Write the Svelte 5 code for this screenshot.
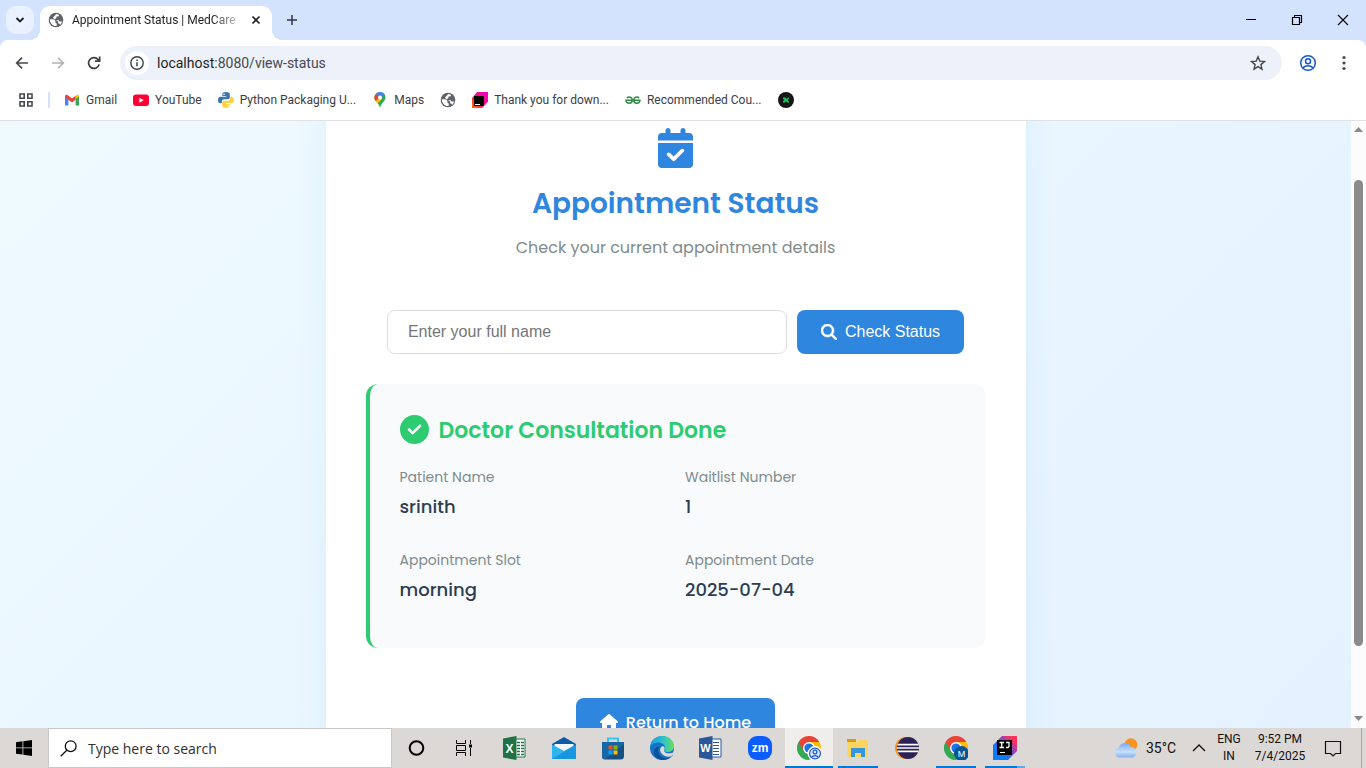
<script>
  let name = $state('');

  const details = [
    { label: 'Patient Name', value: 'srinith' },
    { label: 'Waitlist Number', value: '1' },
    { label: 'Appointment Slot', value: 'morning' },
    { label: 'Appointment Date', value: '2025-07-04' }
  ];

  const bookmarks = [
    { icon: 'gmail', label: 'Gmail' },
    { icon: 'youtube', label: 'YouTube' },
    { icon: 'python', label: 'Python Packaging U...' },
    { icon: 'maps', label: 'Maps' },
    { icon: 'globe', label: '' },
    { icon: 'jetbrains', label: 'Thank you for down...' },
    { icon: 'gfg', label: 'Recommended Cou...' },
    { icon: 'dark', label: '' }
  ];

  const apps = [
    { id: 'cortana', name: 'Cortana' },
    { id: 'taskview', name: 'Task View' },
    { id: 'excel', name: 'Excel' },
    { id: 'mail', name: 'Mail' },
    { id: 'store', name: 'Microsoft Store' },
    { id: 'edge', name: 'Edge' },
    { id: 'word', name: 'Word' },
    { id: 'zoom', name: 'Zoom' },
    { id: 'chrome', name: 'Chrome', state: 'active' },
    { id: 'explorer', name: 'File Explorer', state: 'open' },
    { id: 'eclipse', name: 'Eclipse' },
    { id: 'chromem', name: 'Chrome profile M', state: 'open' },
    { id: 'idea', name: 'IntelliJ IDEA', state: 'open' }
  ];
</script>

{#snippet globe(size)}
  <svg width={size} height={size} viewBox="0 0 16 16" aria-hidden="true">
    <circle cx="8" cy="8" r="7.300" fill="#5f6368" />
    <path d="M1.900 7.300h3.300l2.200 1.500v1.900l1.300.8v2.600C4.800 14.300 1.700 11.300 1.900 7.300zM8.300 1.900l2.800.8-.6 1.600-2.200.4v1.500l-1.500.9.6.9h2.800l1.400 1.500h2.500c-.3 1.300-1 2.500-2 3.300l-.7-1.400h-1.300V9.600L9 8.600 6.200 7.200 5 5.400l1.500-1.500z" fill="#fff" />
  </svg>
{/snippet}

{#snippet chromeLogo()}
  <path d="M12 12V24A12 12 0 0 0 22.400 6H12z" fill="#fbbc04" />
  <path d="M12 12 1.600 6A12 12 0 0 0 12 24l5.200-9z" fill="#34a853" />
  <path d="M12 6h10.400A12 12 0 0 0 1.600 6l5.200 9z" fill="#ea4335" />
  <circle cx="12" cy="12" r="6" fill="#fff" />
  <circle cx="12" cy="12" r="4.600" fill="#1a73e8" />
{/snippet}

<div class="screen">
  <header class="browser">
    <div class="tabs">
      <button class="tab-search" aria-label="Search tabs">
        <svg width="10" height="10" viewBox="0 0 10 10"><path d="m1.500 3 3.500 3.500L8.500 3" fill="none" stroke="#1f1f1f" stroke-width="1.800" /></svg>
      </button>
      <div class="tab">
        {@render globe(16)}
        <span class="tab-title">Appointment Status | MedCare</span>
        <button class="plain" aria-label="Close tab">
          <svg width="10" height="10" viewBox="0 0 10 10"><path d="m1.500 1.500 7 7m0-7-7 7" stroke="#1f1f1f" stroke-width="1.600" /></svg>
        </button>
      </div>
      <button class="plain new-tab" aria-label="New tab">
        <svg width="12" height="12" viewBox="0 0 12 12"><path d="M6 1v10M1 6h10" stroke="#33363b" stroke-width="1.500" /></svg>
      </button>
      <div class="window-buttons">
        <button class="plain" aria-label="Minimize"><svg width="12" height="12" viewBox="0 0 12 12"><path d="M1 5.500h10" stroke="#000" /></svg></button>
        <button class="plain" aria-label="Restore"><svg width="12" height="12" viewBox="0 0 12 12"><path d="M1.500 3.500h7v7h-7zM3.500 3.500v-2h7v7h-2" fill="none" stroke="#000" stroke-width="1.200" /></svg></button>
        <button class="plain" aria-label="Close"><svg width="12" height="12" viewBox="0 0 12 12"><path d="m1 1 10 10M11 1 1 11" stroke="#000" stroke-width="1.100" /></svg></button>
      </div>
    </div>

    <div class="toolbar">
      <button class="plain nav" aria-label="Back"><svg width="16" height="16" viewBox="0 0 16 16"><path d="M14 8H3m5-5.300L2.700 8 8 13.300" fill="none" stroke="#46494d" stroke-width="1.700" /></svg></button>
      <button class="plain nav" aria-label="Forward"><svg width="16" height="16" viewBox="0 0 16 16"><path d="M2 8h11M8 2.700 13.300 8 8 13.300" fill="none" stroke="#b0b2b5" stroke-width="1.600" /></svg></button>
      <button class="plain nav" aria-label="Reload"><svg width="16" height="16" viewBox="0 0 16 16"><path d="M13.200 9.400A5.400 5.400 0 1 1 12 4.400l1.400 1.400M13.700 1.500v4.700H9" fill="none" stroke="#3c4043" stroke-width="1.700" /></svg></button>
      <div class="address">
        <button class="site-info" aria-label="Site information"><svg width="14" height="14" viewBox="0 0 14 14"><circle cx="7" cy="7" r="6.200" fill="none" stroke="#3c4043" stroke-width="1.400" /><path d="M7 6.200v4M7 3.500v1.500" stroke="#3c4043" stroke-width="1.500" /></svg></button>
        <span class="url">localhost<span class="path">:8080/view-status</span></span>
        <button class="plain" aria-label="Bookmark this tab"><svg width="16" height="16" viewBox="0 0 16 16"><path d="m8 1.800 1.800 4.300 4.700.4-3.600 3.100 1.100 4.600L8 11.700l-4 2.500 1.100-4.600L1.500 6.500l4.700-.4z" fill="none" stroke="#46494d" stroke-width="1.400" /></svg></button>
      </div>
      <button class="plain profile" aria-label="Profile"><svg width="18" height="18" viewBox="0 0 18 18" fill="none" stroke="#1558d0" stroke-width="1.500"><circle cx="9" cy="9" r="7.300" /><circle cx="9" cy="7.200" r="2.500" /><path d="M3.800 14c1.500-1.500 3.200-2.200 5.200-2.200s3.700.7 5.200 2.200" /></svg></button>
      <button class="plain menu" aria-label="Browser menu"><svg width="4" height="16" viewBox="0 0 4 16" fill="#46494d"><circle cx="2" cy="2.500" r="1.600" /><circle cx="2" cy="8" r="1.600" /><circle cx="2" cy="13.500" r="1.600" /></svg></button>
    </div>

    <nav class="bookmarks" aria-label="Bookmarks">
      <button class="plain" aria-label="Tab groups"><svg width="16" height="16" viewBox="0 0 16 16"><path d="M2 2h4.200v4.200H2zM9.800 2H14v4.200H9.800zM2 9.800h4.200V14H2zM9.800 9.800H14V14H9.800z" fill="none" stroke="#46494d" stroke-width="1.600" /></svg></button>
      <span class="divider"></span>
      {#each bookmarks as mark}
        <a href="#{mark.icon}" aria-label={mark.label || mark.icon}>
          {#if mark.icon === 'gmail'}
            <svg width="16" height="16" viewBox="0 0 16 16"><path d="M1 13.500V4l3.400 2.500v7z" fill="#4285f4" /><path d="M11.600 13.500v-7L15 4v9.500z" fill="#34a853" /><path d="M11.600 7V3.800c1.400-1.600 3.400-1 3.400.8z" fill="#fbbc04" /><path d="M1 4.600c0-1.800 2-2.400 3.400-.8L8 6.500l3.600-2.700v4L8 10.500 1 5.300z" fill="#ea4335" /></svg>
          {:else if mark.icon === 'youtube'}
            <svg width="16" height="16" viewBox="0 0 16 16"><rect y="2.500" width="16" height="11.500" rx="3" fill="#ff0033" /><path d="m6.300 5.800 4.400 2.400-4.400 2.500z" fill="#fff" /></svg>
          {:else if mark.icon === 'python'}
            <svg width="16" height="16" viewBox="0 0 16 16"><path d="M8 0C5 0 4.300 1 4.300 2.200V4h4v.7H2.500C.8 4.700 0 6 0 8s.8 3.300 2.300 3.300h1.500V9.500c0-1.300 1-2.300 2.300-2.300h3.700c1.200 0 2-.9 2-2V2.200C11.800.7 10.500 0 8 0z" fill="#3776ab" /><path d="M8 16c3 0 3.700-1 3.700-2.200V12h-4v-.7h5.800c1.700 0 2.500-1.300 2.500-3.300s-.8-3.300-2.300-3.300h-1.500v1.800c0 1.300-1 2.300-2.300 2.300H6.200c-1.200 0-2 .9-2 2v3C4.200 15.300 5.500 16 8 16z" fill="#ffd343" /><circle cx="6" cy="2.200" r=".8" fill="#fff" /><circle cx="10" cy="13.800" r=".8" fill="#fff" /></svg>
          {:else if mark.icon === 'maps'}
            <svg width="16" height="16" viewBox="0 0 16 16"><path d="M8 0a5.500 5.500 0 0 0-5.500 5.500C2.500 9.300 7 11 8 16c1-5 5.500-6.700 5.500-10.500A5.500 5.500 0 0 0 8 0z" fill="#34a853" /><path d="M8 0a5.500 5.500 0 0 1 5.100 3.500L8 5.500 3.800 2A5.500 5.500 0 0 1 8 0z" fill="#4285f4" /><path d="M3.800 2 8 5.500 3.600 9A5.500 5.500 0 0 1 3.800 2z" fill="#ea4335" /><path d="M3.600 9 8 5.500l2 1.600-4.300 4.400C4.800 10.600 4 9.800 3.600 9z" fill="#fbbc04" /><circle cx="8" cy="5.500" r="2" fill="#fff" /></svg>
          {:else if mark.icon === 'globe'}
            {@render globe(16)}
          {:else if mark.icon === 'jetbrains'}
            <svg width="16" height="16" viewBox="0 0 16 16"><defs><linearGradient id="jb" x1="0" y1="1" x2="1" y2="0"><stop offset="0" stop-color="#ff6a00" /><stop offset=".45" stop-color="#ff1460" /><stop offset="1" stop-color="#e600e6" /></linearGradient></defs><path d="M5 0h11v9.500L10 16H0V6z" fill="url(#jb)" /><path d="M2 4h10v10H2z" /><path d="M3 12h5v1H3z" fill="#fff" /></svg>
          {:else if mark.icon === 'gfg'}
            <svg width="16" height="16" viewBox="0 0 16 16" fill="none" stroke="#2f8d46" stroke-width="1.500"><path d="M2 6.200c1.400-2 5.300-1.200 5.300 1.800 0 4.300-6 4.300-6.300.3h14c-.3 4-6.300 4-6.300-.3 0-3 3.900-3.800 5.300-1.800" /></svg>
          {:else}
            <svg width="16" height="16" viewBox="0 0 16 16"><circle cx="8" cy="8" r="8" fill="#151719" /><path d="M5 5.500h2.500L8.500 7 10 5.500h1V7L9.500 8l1.500 1.200v1.300H9L8 9.300l-1 1.200H5V9.200L6.500 8 5 7z" fill="#18c45b" /></svg>
          {/if}
          {#if mark.label}<span>{mark.label}</span>{/if}
        </a>
      {/each}
    </nav>
  </header>

  <div class="viewport">
    <main>
      <section class="card">
        <div class="heading">
          <svg class="calendar" viewBox="0 0 448 512" fill="currentColor" aria-hidden="true"><path d="M128 0c17.700 0 32 14.300 32 32V64H288V32c0-17.700 14.300-32 32-32s32 14.300 32 32V64h48c26.500 0 48 21.500 48 48v48H0V112C0 85.500 21.500 64 48 64H96V32c0-17.700 14.300-32 32-32zM0 192H448V464c0 26.500-21.500 48-48 48H48c-26.500 0-48-21.500-48-48V192zM329 305c9.400-9.400 9.400-24.600 0-33.900s-24.600-9.400-33.900 0l-95 95-47-47c-9.400-9.400-24.600-9.400-33.900 0s-9.400 24.600 0 33.900l64 64c9.400 9.400 24.600 9.400 33.900 0L329 305z" /></svg>
          <h1>Appointment Status</h1>
          <p>Check your current appointment details</p>
        </div>

        <form onsubmit={(e) => e.preventDefault()}>
          <input type="text" aria-label="Full name" placeholder="Enter your full name" bind:value={name} />
          <button class="primary">
            <svg width="16" height="16" viewBox="0 0 512 512" fill="currentColor" stroke="currentColor" stroke-width="16" aria-hidden="true"><path d="M416 208c0 45.900-14.900 88.300-40 122.700L502.600 457.400c12.500 12.500 12.500 32.800 0 45.300s-32.800 12.500-45.300 0L330.700 376c-34.400 25.200-76.800 40-122.700 40C93.100 416 0 322.900 0 208S93.100 0 208 0S416 93.100 416 208zM208 352a144 144 0 1 0 0-288 144 144 0 1 0 0 288z" /></svg>
            Check Status
          </button>
        </form>

        <section class="result">
          <h2>
            <svg viewBox="0 0 512 512" fill="currentColor" aria-hidden="true"><path d="M256 512A256 256 0 1 0 256 0a256 256 0 1 0 0 512zM369 209L241 337c-9.400 9.400-24.600 9.400-33.900 0l-64-64c-9.400-9.400-9.400-24.600 0-33.900s24.600-9.400 33.900 0l47 47L335 175c9.400-9.400 24.600-9.400 33.900 0s9.400 24.600 0 33.900z" /></svg>
            <span>Doctor Consultation Done</span>
          </h2>
          <dl>
            {#each details as item}
              <div>
                <dt>{item.label}</dt>
                <dd>{item.value}</dd>
              </div>
            {/each}
          </dl>
        </section>

        <a class="primary home" href="#home">
          <svg width="18" height="16" viewBox="0 0 576 512" fill="currentColor" aria-hidden="true"><path d="M575.800 255.500c0 18-15 32.100-32 32.100h-32l.7 160.200c0 2.700-.2 5.400-.5 8.100V472c0 22.100-17.900 40-40 40H392c-22.100 0-40-17.900-40-40V384c0-17.700-14.300-32-32-32H256c-17.700 0-32 14.300-32 32v88c0 22.100-17.900 40-40 40H104c-22.100 0-40-17.900-40-40V287.600H32c-18 0-32-14-32-32.100c0-9 3-17 10-24L266.400 8c7-7 15-8 22-8s15 2 21 7L564.800 231.500c8 7 12 15 11 24z" /></svg>
          Return to Home
        </a>
      </section>
    </main>
    <div class="scrollbar" aria-hidden="true">
      <svg width="9" height="5" viewBox="0 0 9 5"><path d="M4.500 0 9 5H0z" fill="#8a8a8a" /></svg>
      <span class="track"><span class="thumb"></span></span>
      <svg width="9" height="5" viewBox="0 0 9 5"><path d="M4.500 5 9 0H0z" fill="#8a8a8a" /></svg>
    </div>
  </div>

  <footer class="taskbar">
    <button class="plain start" aria-label="Start"><svg width="16" height="16" viewBox="0 0 16 16"><path d="m0 2.200 6.500-.9v6.200H0zM7.300 1.200 16 0v7.500H7.300zM0 8.300h6.500v6.300L0 13.700zM7.300 8.300H16V16l-8.700-1.300z" /></svg></button>
    <label class="search">
      <svg width="17" height="17" viewBox="0 0 17 17" fill="none" stroke="#111" stroke-width="1.300"><circle cx="10.700" cy="6.200" r="5.400" /><path d="M6.800 10.200.7 16.300" /></svg>
      <input type="text" aria-label="Search" placeholder="Type here to search" />
    </label>
    <div class="apps">
      {#each apps as app}
        <button class="app {app.state ?? ''}" class:grouped={app.id === 'idea'} aria-label={app.name}>
          <svg width="24" height="24" viewBox="0 0 24 24" aria-hidden="true">
            {#if app.id === 'cortana'}
              <circle cx="11.500" cy="12" r="6.800" fill="none" stroke="#000" stroke-width="2" />
            {:else if app.id === 'taskview'}
              <path d="M2.500 4v3.500h9V4M2.500 20v-3.500h9V20M2.500 9.500h9v5h-9zM16.500 4v4M16.500 12v8" fill="none" stroke="#000" /><path d="M15 8.500h3v3h-3z" />
            {:else if app.id === 'excel'}
              <path d="M12 3h10v18H12z" fill="#fff" stroke="#217346" /><path d="M14 6.500h7M14 9.500h7M14 12.500h7M14 15.500h7M14 18.500h7" stroke="#217346" stroke-width="1.500" /><path d="M17.500 5v15" stroke="#fff" /><path d="M0 2.500 13.500 0v24L0 21.500z" fill="#1f7244" /><text x="6.500" y="16.500" text-anchor="middle" class="glyph" font-size="12">X</text>
            {:else if app.id === 'mail'}
              <path d="M0 8 12 1l12 7v15H0z" fill="#0a5ba8" /><path d="M2.500 8h19v8h-19z" fill="#f5f5f5" /><path d="M0 8.500 12 15l12-6.500V23H0z" fill="#2db5ef" /><path d="M0 23 24 8.500V23z" fill="#1897e0" />
            {:else if app.id === 'store'}
              <path d="M7 8V2.500h10V8" fill="none" stroke="#35c3f5" stroke-width="2" /><path d="M1 6h22v14a3.500 3.500 0 0 1-3.500 3.500h-15A3.500 3.500 0 0 1 1 20z" fill="#174f83" /><path d="M1 6h22v2L4 23.500A3.500 3.500 0 0 1 1 20z" fill="#1767a5" /><path d="M7.500 9.500h4v4h-4z" fill="#f25022" /><path d="M12.500 9.500h4v4h-4z" fill="#7fba00" /><path d="M7.500 14.500h4v4h-4z" fill="#00a4ef" /><path d="M12.500 14.500h4v4h-4z" fill="#ffb900" />
            {:else if app.id === 'edge'}
              <defs><linearGradient id="edgeTop" x1="0" y1="0" x2="1" y2="0"><stop offset=".1" stop-color="#1ba4e0" /><stop offset=".6" stop-color="#32c6c3" /><stop offset="1" stop-color="#6cdf55" /></linearGradient></defs>
              <circle cx="12" cy="12" r="12" fill="#1573c4" /><path d="M0 11.500C.5 5 5.500 0 12 0c7 0 12 5 12 10 0 4-3 6-6.500 6-3 0-4-1.200-3.500-2 1-1.200 1.300-2.500.7-4C13.500 7.500 10.500 6.300 7.500 6.500 4 6.800 1 8.500 0 11.500z" fill="url(#edgeTop)" /><path d="M9 10.500c-2 3.500-.5 9.500 4.500 11.500 3 1 6 0 8.500-3.500 1 .5.500 1 0 1.500-4 5-12 5-16 1C2 17 4 11 9 10.500z" fill="#0d4d98" /><path d="M14 14c-.5 2 2.500 4 8 3l2-1-2.200 4c-2.200 1.300-8 1.500-11-3.500-1.300-2.500-.7-4.800 1-6 2-1 3.700 1 2.200 3.500z" fill="#ddd9d6" />
            {:else if app.id === 'word'}
              <path d="M12 3h10v18H12z" fill="#fff" stroke="#2b579a" /><path d="M14 6.500h6M14 9.500h6M14 12.500h6M14 15.500h6M14 18.500h6" stroke="#2b579a" stroke-width="1.200" /><path d="M0 2.500 13.500 0v24L0 21.500z" fill="#2b579a" /><text x="6.500" y="16" text-anchor="middle" class="glyph" font-size="11">W</text>
            {:else if app.id === 'zoom'}
              <rect width="24" height="24" rx="9" fill="#0b5cff" /><text x="12" y="15.500" text-anchor="middle" class="glyph" font-size="12">zm</text>
            {:else if app.id === 'chrome'}
              {@render chromeLogo()}
              <circle cx="18" cy="17.500" r="7.500" fill="#fff" /><g fill="#dbe8ff" stroke="#1558d0" stroke-width="1.200"><circle cx="18" cy="17.500" r="5.400" /><circle cx="18" cy="16" r="1.900" /><path d="M14.400 21.300c2-2.300 5.200-2.300 7.200 0" /></g>
            {:else if app.id === 'explorer'}
              <path d="M1 3h9v4H1z" fill="#d99a0b" /><path d="M1 6h21v15H1z" fill="#fcd462" /><path d="M12 4h10v3H12z" fill="#fcd462" /><path d="M5 12h14v9h-4v-4H9v4H5z" fill="#3297dc" />
            {:else if app.id === 'eclipse'}
              <circle cx="11" cy="12" r="11" fill="#f7941e" /><circle cx="13" cy="12" r="11" fill="#2c2255" /><path d="M2.500 8.700h21M2 12h22M2.500 15.300h21" stroke="#fff" stroke-width="1.700" />
            {:else if app.id === 'chromem'}
              {@render chromeLogo()}
              <circle cx="17.500" cy="17.500" r="7.500" fill="#075598" /><text x="17.500" y="21" text-anchor="middle" class="glyph thin" font-size="9">M</text>
            {:else}
              <defs><linearGradient id="ij" x1="0" y1="1" x2="1" y2="0"><stop offset=".3" stop-color="#087cfa" /><stop offset=".6" stop-color="#8a45c0" /><stop offset=".85" stop-color="#fe315d" /></linearGradient></defs>
              <path d="M9 0h15v15l-9 9H0V9z" fill="url(#ij)" /><path d="M4 4h15v15H4z" /><path d="M6.500 6.500H11M8.700 6.500v5M6.500 11.500H11M13 6.500h3v4l-1 1h-2" stroke="#fff" stroke-width="1.300" fill="none" /><path d="M7 16h5v1H7z" fill="#fff" />
            {/if}
          </svg>
        </button>
      {/each}
    </div>
    <div class="tray">
      <button class="plain weather">
        <svg width="24" height="20" viewBox="0 0 24 20" aria-hidden="true"><defs><linearGradient id="cloud" x1="0" y1="0" x2="0" y2="1"><stop offset="0" stop-color="#7da9ee" /><stop offset=".6" stop-color="#c9dffb" /><stop offset="1" stop-color="#86b1f3" /></linearGradient></defs><circle cx="17" cy="6.500" r="6.300" fill="#f7931e" /><path d="M5.500 19.500a5 5 0 0 1-.7-9.800A6.500 6.500 0 0 1 17 9a5.500 5.500 0 0 1 2 10.500z" fill="url(#cloud)" /></svg>
        35°C
      </button>
      <button class="plain" aria-label="Show hidden icons"><svg width="14" height="8" viewBox="0 0 14 8"><path d="m1 7 6-6 6 6" fill="none" stroke="#111" stroke-width="1.400" /></svg></button>
      <span class="stack lang"><span>ENG</span><span>IN</span></span>
      <span class="stack clock"><span>9:52 PM</span><span>7/4/2025</span></span>
      <button class="plain" aria-label="Notifications"><svg width="18" height="17" viewBox="0 0 18 17"><path d="M1.500 1.500h15v12h-5L9 16l-2.500-2.500h-5z" fill="none" stroke="#111" stroke-width="1.200" /></svg></button>
      <span class="desktop-edge"></span>
    </div>
  </footer>
</div>

<style>
  .screen {
    --ui: 'Segoe UI', 'Open Sans', sans-serif;
    --narrow: 'Segoe UI', Roboto, sans-serif;
    --page: Poppins, Inter, sans-serif;
    --blue: #2e86de;
    display: flex;
    flex-direction: column;
    height: 100vh;
    overflow: hidden;
    font-family: var(--narrow);
    font-size: 12px;
    color: #1f1f1f;
  }
  .screen * { box-sizing: border-box; }
  svg { display: block; flex: none; }
  .plain {
    display: flex;
    align-items: center;
    justify-content: center;
    padding: 0;
    border: 0;
    background: none;
    color: inherit;
    font: inherit;
  }

  .browser { flex: none; background: #d3e3fd; border-bottom: 1px solid #dfe1e5; }
  .tabs { display: flex; align-items: center; height: 40px; padding-left: 6px; }
  .tab-search {
    display: flex;
    align-items: center;
    justify-content: center;
    width: 28px;
    height: 28px;
    border: 0;
    border-radius: 10px;
    background: #e9f1fe;
  }
  .tab {
    position: relative;
    display: flex;
    align-items: center;
    align-self: flex-end;
    gap: 8px;
    width: 232px;
    height: 34px;
    margin-left: 6px;
    padding: 0 11px 6px 8px;
    border-radius: 10px 10px 0 0;
    background: #fff;
  }
  /* Flared feet that join the active tab to the toolbar */
  .tab::before,
  .tab::after {
    content: '';
    position: absolute;
    bottom: 0;
    width: 10px;
    height: 10px;
  }
  .tab::before { right: 100%; background: radial-gradient(circle at 0 0, transparent 10px, #fff 10px); }
  .tab::after { left: 100%; background: radial-gradient(circle at 100% 0, transparent 10px, #fff 10px); }
  .tab-title {
    flex: 1;
    white-space: nowrap;
    mask-image: linear-gradient(to right, #000 82%, transparent 102%);
  }
  .new-tab { width: 40px; }
  .window-buttons { display: flex; margin-left: auto; }
  .window-buttons .plain { width: 46px; height: 40px; }

  .toolbar { display: flex; align-items: center; height: 46px; padding: 0 20px 0 4px; border-radius: 8px 8px 0 0; background: #fff; }
  .nav { width: 36px; }
  .address {
    display: flex;
    flex: 1;
    align-items: center;
    height: 34px;
    margin-left: 8px;
    padding: 0 16px 0 5px;
    border-radius: 17px;
    background: #edf1fa;
  }
  .site-info {
    display: flex;
    align-items: center;
    justify-content: center;
    width: 24px;
    height: 24px;
    padding: 0;
    border: 0;
    border-radius: 50%;
    background: #fff;
  }
  .url { flex: 1; margin-left: 8px; font-size: 14px; }
  .path { color: #46494d; }
  .profile { margin-left: 17px; }
  .menu { margin-left: 25px; }

  .bookmarks { display: flex; align-items: center; height: 34px; padding: 0 18px 6px; background: #fff; color: #3c4043; }
  .bookmarks a { display: flex; gap: 6px; align-items: center; margin-right: 16px; color: inherit; text-decoration: none; white-space: nowrap; }
  .divider { width: 2px; height: 16px; margin: 0 14px; background: #d3e3fd; }

  .viewport { display: flex; flex: 1; min-height: 0; overflow: hidden; }
  main {
    flex: 1;
    overflow: hidden;
    background: linear-gradient(135deg, #effaff, #e4f2ff);
    font-family: var(--page);
  }
  .card {
    display: flex;
    flex-direction: column;
    align-items: center;
    max-width: 700px;
    margin: -60px auto 0;
    padding: 67px 40px 40px;
    background: #fff;
    box-shadow: 0 10px 30px rgba(46, 134, 222, 0.08);
  }
  .heading { text-align: center; }
  .calendar { width: 35px; height: 40px; margin: 0 auto; color: var(--blue); }
  h1 { margin: 13px 0 0; color: var(--blue); font-size: 28px; font-weight: 600; line-height: 46px; }
  p { margin: 8px 0 0; color: #7f8c8d; font-size: 16px; line-height: 25px; }
  form { display: flex; gap: 10px; width: 100%; margin-top: 50px; justify-content: center; }
  form input {
    flex: 0 1 400px;
    min-width: 0;
    height: 44px;
    padding: 0 20px;
    border: 1px solid #ddd;
    border-radius: 8px;
    font-family: 'Liberation Sans', sans-serif;
    font-size: 16px;
  }
  input::placeholder { color: #757575; opacity: 1; }
  .primary {
    display: flex;
    align-items: center;
    gap: 8px;
    height: 44px;
    padding: 0 24px;
    border: 0;
    border-radius: 8px;
    background: var(--blue);
    color: #fff;
    font-family: 'Liberation Sans', sans-serif;
    font-size: 16px;
    text-decoration: none;
    white-space: nowrap;
  }
  .home { height: 48px; margin-top: 50px; font-family: var(--page); font-weight: 500; }
  .result {
    width: 100%;
    margin-top: 30px;
    padding: 28px 30px 45px;
    border-left: 4px solid #2ecc71;
    border-radius: 12px;
    background: #f8fafc;
  }
  h2 { display: flex; align-items: flex-start; gap: 10px; height: 36px; margin: 0; color: #2ecc71; font-size: 22px; font-weight: 600; line-height: 34px; }
  h2 svg { width: 29px; height: 29px; margin-top: 3px; }
  h2 span { padding-top: 2px; }
  dl { display: grid; grid-template-columns: 1fr 1fr; gap: 29px 15px; margin: 18px 0 0; }
  dt { color: #7f8c8d; font-size: 14px; line-height: 22px; }
  dd { margin: 5px 0 0; color: #2c3e50; font-size: 18px; font-weight: 500; line-height: 27px; }

  .scrollbar { display: flex; flex: none; flex-direction: column; align-items: center; width: 15px; padding: 6px 0 7px; background: #fcfcfc; }
  .track { flex: 1; padding-top: 48px; }
  .thumb { display: block; width: 9px; height: 87%; border-radius: 5px; background: #8b8b8b; }

  .taskbar { display: flex; flex: none; height: 40px; background: #dcd8d5; color: #111; }
  .start { width: 48px; }
  .search { display: flex; align-items: center; gap: 11px; width: 344px; padding: 0 11px; border: 1px solid #c8c8c8; background: #fff; }
  .search input { flex: 1; min-width: 0; border: 0; padding: 0; outline: 0; font: 14px var(--ui); }
  .search input::placeholder { color: #303030; }
  .apps { display: flex; gap: 1px; padding-left: 1px; }
  .app { display: flex; align-items: center; justify-content: center; width: 48px; padding: 0; border: 0; background: none; }
  .active { background: linear-gradient(#0078d7, #0078d7) bottom / 100% 2px no-repeat #f0eeed; }
  .open { background: linear-gradient(#0078d7, #0078d7) bottom / 40px 2px no-repeat; }
  .grouped { background: linear-gradient(to right, #0078d7 32px, #5fa9e6 32px) bottom / 40px 2px no-repeat; }
  .glyph { fill: #fff; font-family: 'Liberation Sans', sans-serif; font-weight: 700; }
  .thin { font-weight: 400; }
  .tray { display: flex; align-items: center; gap: 16px; margin-left: auto; }
  .weather { gap: 8px; font-size: 14px; }
  .stack { display: flex; flex-direction: column; align-items: center; line-height: 17px; }
  .lang { width: 24px; margin-left: -5px; }
  .clock { width: 50px; margin: 0 3px 0 -2px; }
  .desktop-edge { align-self: stretch; width: 5px; margin-left: 3px; border-left: 1px solid #aaa6a4; }
</style>
